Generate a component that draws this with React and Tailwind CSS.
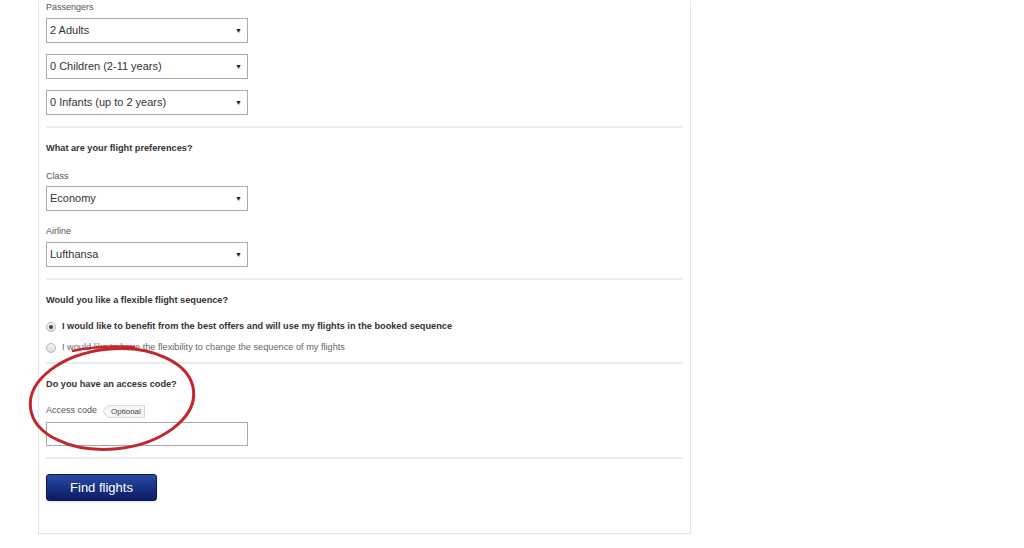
import React from 'react';

const font = { fontFamily: '"Liberation Sans", Arial, sans-serif' };

const Select = ({ value, className = '' }) => (
    <div className={`flex items-center justify-between w-[202px] h-[25px] border border-[#a9a9a9] bg-white pl-[3px] pr-[5px] ${className}`}>
        <span className="text-[11px] text-[#333]">{value}</span>
        <span className="text-[7px] text-[#222] leading-none">▼</span>
    </div>
);

const Label = ({ children, className = '' }) => (
    <div className={`text-[9px] leading-[12px] text-[#555] ${className}`}>{children}</div>
);

const Heading = ({ children, className = '' }) => (
    <div className={`text-[9.2px] leading-[12px] font-bold text-[#333] ${className}`}>{children}</div>
);

const Divider = ({ className = '' }) => <div className={`h-[2px] bg-[#ececec] ${className}`} />;

const Radio = ({ checked, label, bold }) => (
    <div className="flex items-center h-[12px]">
        <span className="w-[10px] h-[10px] rounded-full border border-[#b8b8b8] bg-gradient-to-b from-[#f4f4f4] to-[#dcdcdc] flex items-center justify-center">
            {checked && <span className="w-[4px] h-[4px] rounded-full bg-[#444]" />}
        </span>
        <span className={`ml-[6px] text-[9.2px] ${bold ? 'font-bold text-[#333]' : 'text-[#666]'}`}>{label}</span>
    </div>
);

export default function App() {
    return (
        <div className="w-[1024px] h-[548px] bg-white relative overflow-hidden" style={font}>
            <div className="ml-[38px] w-[653px] h-[533px] border-x border-b border-[#e3e3e3] px-[7px]">
                <Label className="mt-[1px]">Passengers</Label>
                <Select value="2 Adults" className="mt-[5px]" />
                <Select value="0 Children (2-11 years)" className="mt-[11px]" />
                <Select value="0 Infants (up to 2 years)" className="mt-[11px]" />
                <Divider className="mt-[11px]" />

                <Heading className="mt-[14px]">What are your flight preferences?</Heading>
                <Label className="mt-[16px]">Class</Label>
                <Select value="Economy" className="mt-[4px]" />
                <Label className="mt-[14px]">Airline</Label>
                <Select value="Lufthansa" className="mt-[5px]" />
                <Divider className="mt-[11px]" />

                <Heading className="mt-[14px]">Would you like a flexible flight sequence?</Heading>
                <div className="mt-[15px] flex flex-col gap-[9px]">
                    <Radio checked bold label="I would like to benefit from the best offers and will use my flights in the booked sequence" />
                    <Radio label="I would like to have the flexibility to change the sequence of my flights" />
                </div>
                <Divider className="mt-[8px]" />

                <Heading className="mt-[14px]">Do you have an access code?</Heading>
                <div className="mt-[15px] flex items-center h-[12px]">
                    <span className="text-[9px] text-[#555]">Access code</span>
                    <span className="ml-[5px] flex items-center h-[13px]">
                        <svg width="6" height="13" viewBox="0 0 6 13">
                            <path d="M6 0.5 L0.8 6.5 L6 12.5" fill="#f6f6f6" stroke="#d8d8d8" strokeWidth="1" />
                        </svg>
                        <span className="h-[13px] px-[3px] border border-l-0 border-[#d8d8d8] bg-[#f6f6f6] text-[8px] leading-[11px] text-[#444]">Optional</span>
                    </span>
                </div>
                <div className="mt-[5px] w-[202px] h-[24px] border border-[#a9a9a9] bg-white" />
                <Divider className="mt-[11px]" />

                <button className="mt-[15px] w-[111px] h-[27px] rounded-[3px] bg-gradient-to-b from-[#2a4aa6] to-[#0b1c62] border border-[#0a1a5a] text-white text-[13px] shadow-sm">
                    Find flights
                </button>
            </div>

            <svg className="absolute left-0 top-0 pointer-events-none" width="260" height="520" viewBox="0 0 260 520">
                <ellipse cx="112" cy="399" rx="82" ry="50" transform="rotate(-6 112 399)" fill="none" stroke="#c1272d" strokeWidth="3" />
                <path d="M72 351 Q100 345 135 347" fill="none" stroke="#c1272d" strokeWidth="2.5" />
            </svg>
        </div>
    );
}
